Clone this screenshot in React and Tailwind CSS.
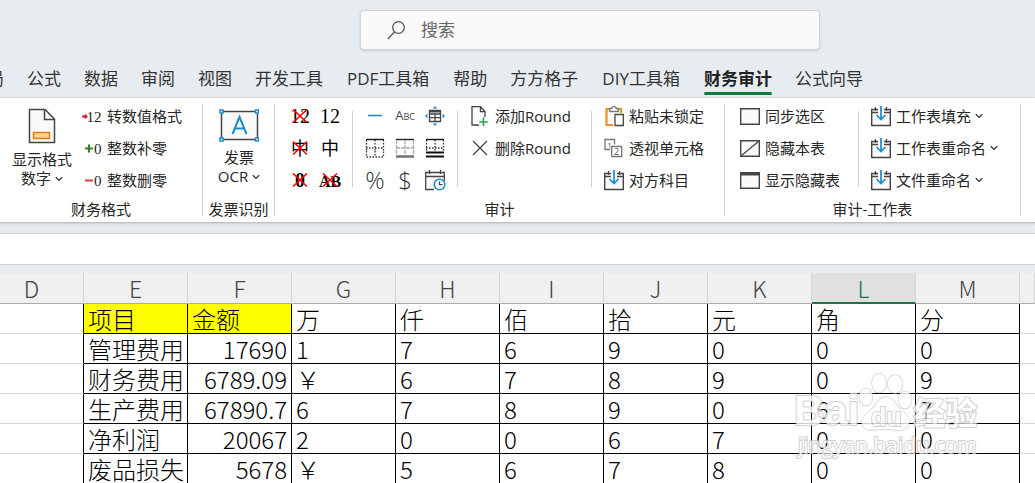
import clsx from "clsx";

const TABS = [
  "页面布局",
  "公式",
  "数据",
  "审阅",
  "视图",
  "开发工具",
  "PDF工具箱",
  "帮助",
  "方方格子",
  "DIY工具箱",
  "财务审计",
  "公式向导",
];

const COLUMNS = ["D", "E", "F", "G", "H", "I", "J", "K", "L", "M", ""];

const ROWS = [
  ["项目", "金额", "万", "仟", "佰", "拾", "元", "角", "分"],
  ["管理费用", "17690", "1", "7", "6", "9", "0", "0", "0"],
  ["财务费用", "6789.09", "￥", "6", "7", "8", "9", "0", "9"],
  ["生产费用", "67890.7", "6", "7", "8", "9", "0", "6", "7"],
  ["净利润", "20067", "2", "0", "0", "6", "7", "0", "0"],
  ["废品损失", "5678", "￥", "5", "6", "7", "8", "0", "0"],
];

function Icon({ children, className = "h-[22px] w-[22px]" }) {
  return (
    <svg
      viewBox="0 0 22 22"
      fill="none"
      stroke="#444"
      strokeWidth="1.3"
      className={clsx("block shrink-0", className)}
      aria-hidden="true"
    >
      {children}
    </svg>
  );
}

function Chevron() {
  return (
    <svg viewBox="0 0 8 6" className="h-1.5 w-2 shrink-0" fill="none" stroke="#333" strokeWidth="1.3" aria-hidden="true">
      <path d="M.8 1.2 4 4.4 7.2 1.2" />
    </svg>
  );
}

/* Digit icon with a coloured sign in front */
function SignedIcon({ sign, digits }) {
  return (
    <svg viewBox="0 0 20 22" className="block h-[22px] w-5 shrink-0" aria-hidden="true">
      {sign === "plus" && <path d="M3 11.5h8M7 7.5v8" stroke="#3c7d22" strokeWidth="2" />}
      {sign === "minus" && <path d="M3 11.5h8" stroke="#d9412f" strokeWidth="2" />}
      {sign === "arrow" && <path d="M0 11.5h5.5M3.5 9.5v4" stroke="#c9184a" strokeWidth="2" />}
      <text x="19.5" y="16.5" textAnchor="end" fontSize="15" fill="#222" fontFamily="Liberation Serif, serif">
        {digits}
      </text>
    </svg>
  );
}

function GlyphIcon({ text, crossed, size = 20, bold }) {
  return (
    <svg viewBox="0 0 20 22" className="block h-[22px] w-5 overflow-visible" aria-hidden="true">
      <text
        x="10"
        y="17.5"
        textAnchor="middle"
        fontSize={size}
        fontWeight={bold ? 700 : 400}
        fill="#000"
        fontFamily="Liberation Serif, Noto Sans CJK SC, serif"
      >
        {text}
      </text>
      {crossed && <path d="M3 4.5 17 17.5M17 4.5 3 17.5" stroke="#f00" strokeWidth="1.7" />}
    </svg>
  );
}

function CalendarArrowIcon() {
  return (
    <Icon>
      <path d="M1.7 4.5h18.6v16H1.7z" fill="#fafafa" strokeWidth="1.4" />
      <path d="M1 7.5h20M5.5 2v4M16.5 2v4" />
      <path d="M8 3h6v6H8z" fill="#fff" stroke="none" />
      <path d="M11 1v13M6.5 10l4.5 4.5 4.5-4.5" stroke="#1e8bcd" strokeWidth="1.7" />
    </Icon>
  );
}

function CalendarClockIcon() {
  return (
    <Icon>
      <path d="M10 20.5H1.7v-17h18.6V12" fill="#fafafa" />
      <path d="M1.7 7.5h18.6M5.5 1v4M16.5 1v4" />
      <circle cx="15.5" cy="15.5" r="5.3" fill="#fff" stroke="#1e8bcd" strokeWidth="1.6" />
      <path d="M15.5 12.5v3.2h3" stroke="#444" />
    </Icon>
  );
}

function MoveTableIcon() {
  return (
    <Icon>
      <path d="M5.5 5.5h11v11h-11zM5.5 9h11M5.5 12.7h11M11 8.5v8" />
      <path d="M5 6.5h12" strokeWidth="2" />
      <path d="m11 1 2.3 2.5H8.7zM11 21l2.3-2.5H8.7zM1 11l2.4-2.5v5zM21 11l-2.4-2.5v5z" fill="#1e8bcd" stroke="none" />
    </Icon>
  );
}

function BorderIcon({ kind }) {
  return (
    <Icon>
      {kind === "gray" ? (
        <>
          <path d="M2 2.5h18" stroke="#222" strokeWidth="1.4" />
          <path d="M2 11h18M11 3v15M2.5 3v15M19.5 3v15" stroke="#aaa" strokeDasharray="4 1" />
          <path d="M2 19.5h18" stroke="#777" strokeWidth="2.6" />
        </>
      ) : (
        <>
          <path d="M2 2.5h18" stroke="#111" strokeWidth="1.4" />
          <path d="M2 11h18M11 3v12M2.5 3v12M19.5 3v12" stroke="#333" strokeDasharray="1.5 1.5" />
          {kind === "dotted" ? (
            <path d="M2.5 14v6h17v-6M11 14v6" stroke="#333" strokeDasharray="1.5 1.5" />
          ) : (
            <path d="M2 15.5h18M2 19.5h18" stroke="#111" strokeWidth="1.8" />
          )}
        </>
      )}
    </Icon>
  );
}

function AddPageIcon() {
  return (
    <Icon>
      <path d="M10 20H3V1.7h8.5L16 6.5V12" fill="#fafafa" />
      <path d="M11.5 1.7v5H16" />
      <path d="M14.5 12.5v8.5M10.3 17h8.5" stroke="#2e9e4f" strokeWidth="1.6" />
    </Icon>
  );
}

function PasteIcon() {
  return (
    <Icon>
      <path d="M10 20H3.5V4H7M14 4h4v4" stroke="#e8912d" strokeWidth="2.2" />
      <path d="M6.7 6.5v-3h2.2C9 .9 13 .9 13.1 3.5h2.2v3z" fill="#fff" stroke="#777" />
      <path d="M12 9.5h8.3v11H12z" fill="#fff" />
    </Icon>
  );
}

function NumberedCellsIcon() {
  return (
    <Icon>
      <path d="M7 12.5H2v-10h9.5v5" stroke="#777" />
      <path d="M8.7 9.5h10v10h-10z" fill="#fff" stroke="#777" />
      <text x="6.5" y="10.5" fontSize="8" textAnchor="middle" fill="#555" stroke="none" fontFamily="Open Sans, sans-serif">
        1
      </text>
      <text x="13.7" y="18" fontSize="9" textAnchor="middle" fill="#555" stroke="none" fontFamily="Open Sans, sans-serif">
        2
      </text>
    </Icon>
  );
}

function SheetIcon({ kind }) {
  return (
    <Icon>
      <path d="M1.7 3.7h18.6v15.5H1.7z" fill="#fafafa" strokeWidth="1.4" />
      {kind === "slash" && <path d="M2.5 18.5 19.5 4.5" />}
      {kind === "title" && <path d="M1 5h20" strokeWidth="3" />}
    </Icon>
  );
}

function Separator({ short }) {
  return <div className={clsx("w-px shrink-0 self-stretch bg-[#cfcfcf]", short ? "mt-[13px] mb-[9px]" : "my-1.5")} />;
}

function Group({ title, children, className }) {
  return (
    <section className="flex shrink-0 flex-col" aria-label={title}>
      <div className={clsx("flex h-[98px]", className)}>{children}</div>
      <h2 className="py-px text-center text-[15px] leading-6">{title}</h2>
    </section>
  );
}

function Column({ children }) {
  return <div className="flex flex-col pt-0.5">{children}</div>;
}

function Command({ icon, label, menu, gap = "gap-1" }) {
  return (
    <button type="button" className={clsx("flex h-8 items-center whitespace-nowrap text-[15px]", gap)}>
      {icon}
      <span>{label}</span>
      {menu && <Chevron />}
    </button>
  );
}

function BigCommand({ icon, top, bottom }) {
  return (
    <button type="button" className="flex w-[60px] flex-col items-center justify-start pt-2 text-[15px] leading-[19px]">
      {icon}
      <span className="whitespace-nowrap">{top}</span>
      <span className="flex items-center gap-1 whitespace-nowrap">
        {bottom}
        <Chevron />
      </span>
    </button>
  );
}

function IconGrid({ items, className }) {
  return (
    <div className={clsx("grid auto-rows-[32px] pt-0.5", className)}>
      {items.map(([label, icon]) => (
        <button key={label} type="button" aria-label={label} className="flex items-center justify-center">
          {icon}
        </button>
      ))}
    </div>
  );
}

function Ribbon() {
  return (
    <div className="flex overflow-hidden border-t border-b border-t-[#dcdfe1] border-b-[#bfc3c6] bg-white text-[#262626] shadow-sm">
      <Group title="财务格式" className="pl-3 pr-5">
        <BigCommand
          top="显示格式"
          bottom="数字"
          icon={
            <svg viewBox="0 0 28 44" className="h-11 w-7" fill="none" aria-hidden="true">
              <path d="M1.5 3.5h15.5l9.5 9.5v23.5h-25z" fill="#fafafa" stroke="#444" strokeWidth="1.5" />
              <path d="M16.5 3.5v10h10" stroke="#444" strokeWidth="1.5" />
              <path d="M5.5 26.5h16v6h-16z" fill="#f8d48a" stroke="#e07b1a" strokeWidth="1.5" />
            </svg>
          }
        />
        <div className="w-2.5" />
        <Column>
          <Command gap="gap-[5px]" icon={<SignedIcon sign="arrow" digits="12" />} label="转数值格式" />
          <Command gap="gap-[5px]" icon={<SignedIcon sign="plus" digits="0" />} label="整数补零" />
          <Command gap="gap-[5px]" icon={<SignedIcon sign="minus" digits="0" />} label="整数删零" />
        </Column>
      </Group>
      <Separator />
      <Group title="发票识别" className="pl-1.5 pr-[5px]">
        <BigCommand
          top="发票"
          bottom="OCR"
          icon={
            <svg viewBox="0 0 40 42" className="h-[42px] w-10" fill="none" aria-hidden="true">
              <path d="M2.5 5.5h36v28h-36z" fill="#fafafa" stroke="#444" strokeWidth="1.5" />
              <g fill="#fff" stroke="#1e8bcd" strokeWidth="1.5">
                <path d="M1 4h3v3H1zM36.5 4h3v3h-3zM1 32h3v3H1zM36.5 32h3v3h-3z" />
              </g>
              <path d="m13.5 28 7-17 7 17M16 22.5h9" stroke="#1e8bcd" strokeWidth="2" />
            </svg>
          }
        />
      </Group>
      <Separator />
      <Group title="审计" className="pl-[15px] pr-5">
        <IconGrid
          className="grid-cols-[20px_20px] gap-x-2.5"
          items={[
            ["删除数字", <GlyphIcon text="12" crossed />],
            ["保留数字", <GlyphIcon text="12" />],
            ["删除中文", <GlyphIcon text="中" size={18} crossed />],
            ["保留中文", <GlyphIcon text="中" size={18} />],
            ["删除零值", <GlyphIcon text="0" size={20} crossed bold />],
            ["删除字母", <GlyphIcon text="AB" size={16} crossed bold />],
          ]}
        />
        <div className="w-3" />
        <Separator short />
        <div className="w-[11px]" />
        <IconGrid
          className="grid-cols-[22px_22px_22px] gap-x-2"
          items={[
            ["横线", <Icon><path d="M4 10.5h14" stroke="#1e8bcd" strokeWidth="1.6" /></Icon>],
            [
              "小型大写",
              <span className="text-[13px] text-[#444] [font-variant:small-caps]">Abc</span>,
            ],
            ["移动表格", <MoveTableIcon />],
            ["虚线边框", <BorderIcon kind="dotted" />],
            ["粗下边框", <BorderIcon kind="gray" />],
            ["双下边框", <BorderIcon kind="double" />],
            ["百分比", <span className="font-['Open_Sans'] text-[24px] leading-8 font-light text-[#333]">%</span>],
            ["货币", <span className="font-['Open_Sans'] text-[24px] leading-8 font-light text-[#333]">$</span>],
            ["日期", <CalendarClockIcon />],
          ]}
        />
        <div className="w-[11px]" />
        <Separator short />
        <div className="w-[11px]" />
        <Column>
          <Command icon={<AddPageIcon />} label="添加Round" />
          <Command
            icon={<Icon><path d="m4 4 14 14M18 4 4 18" /></Icon>}
            label="删除Round"
          />
        </Column>
        <div className="w-5" />
        <Separator short />
        <div className="w-[11px]" />
        <Column>
          <Command icon={<PasteIcon />} label="粘贴未锁定" />
          <Command icon={<NumberedCellsIcon />} label="透视单元格" />
          <Command icon={<CalendarArrowIcon />} label="对方科目" />
        </Column>
      </Group>
      <Separator />
      <Group title="审计-工作表" className="pl-3.5 pr-[22px]">
        <Column>
          <Command icon={<SheetIcon />} label="同步选区" />
          <Command icon={<SheetIcon kind="slash" />} label="隐藏本表" />
          <Command icon={<SheetIcon kind="title" />} label="显示隐藏表" />
        </Column>
        <div className="w-[18px]" />
        <Separator short />
        <div className="w-[11px]" />
        <Column>
          <Command icon={<CalendarArrowIcon />} label="工作表填充" menu />
          <Command icon={<CalendarArrowIcon />} label="工作表重命名" menu />
          <Command icon={<CalendarArrowIcon />} label="文件重命名" menu />
        </Column>
      </Group>
      <Separator />
    </div>
  );
}

function Sheet() {
  return (
    <table className="w-full table-fixed border-separate border-spacing-0 bg-white font-['Noto_Sans_CJK_SC',sans-serif] font-light text-black">
      <colgroup>
        {COLUMNS.map((name, i) => (
          <col key={i} className={clsx(i === 0 && "w-[84px]", i > 0 && name && "w-[104px]")} />
        ))}
      </colgroup>
      <thead>
        <tr className="h-[31px]">
          {COLUMNS.map((name, i) => (
            <th
              key={i}
              scope="col"
              className={clsx(
                "border-r border-r-[#d6d6d6] py-0 pl-0 text-center text-[23px] leading-7 font-light",
                i === 0 ? "pr-5" : "pr-0",
                name === "L"
                  ? "border-b-2 border-b-[#217346] bg-[#e0e0e0] text-[#217346]"
                  : "border-b border-b-[#ababab] bg-[#f0f0f0] text-[#444]",
              )}
            >
              {name}
            </th>
          ))}
        </tr>
      </thead>
      <tbody>
        {ROWS.map((cells, r) => (
          <tr key={r} className="h-[30px]">
            <td className="border-r border-b border-r-black border-b-[#d9d9d9] p-0" />
            {cells.map((value, c) => (
              <td
                key={c}
                className={clsx(
                  "border-r border-b border-black px-1 py-0 text-2xl leading-[29px] whitespace-nowrap",
                  r > 0 && c === 1 && "text-right",
                  r === 0 && c < 2 && "bg-[#ffff00]",
                )}
              >
                {value}
              </td>
            ))}
            <td className="border-b border-[#d9d9d9] p-0" />
          </tr>
        ))}
      </tbody>
    </table>
  );
}

function Watermark() {
  return (
    <div className="pointer-events-none absolute top-[98px] left-[794px] whitespace-nowrap text-white opacity-80 [-webkit-text-stroke:2px_#c4c4c4] [paint-order:stroke_fill]">
      <div className="flex h-[60px] items-end">
        <span className="font-['Liberation_Sans'] text-[42px] leading-10 font-bold">Bai</span>
        <div className="relative h-[60px] w-[54px]">
          <svg viewBox="0 0 54 60" className="h-full w-full" fill="#fff" stroke="#c4c4c4" strokeWidth="1.4" aria-hidden="true">
            <ellipse cx="7" cy="26" rx="6.5" ry="8.5" />
            <ellipse cx="20" cy="12" rx="7" ry="9.5" />
            <ellipse cx="36" cy="13" rx="7.5" ry="9" />
            <ellipse cx="46" cy="29" rx="6.5" ry="8.5" />
            <path d="M27 26c-7 0-9 7-13 11S3 45 3 51s5 9 11 8 8-1 13-1 8 1 14 1 9-4 9-9-6-9-10-13-6-11-13-11z" />
          </svg>
          <span className="absolute inset-x-0 bottom-0 text-center font-['Liberation_Sans'] text-[25px] leading-7 font-bold">
            du
          </span>
        </div>
        <span className="font-['Noto_Sans_CJK_SC',sans-serif] text-[32px] leading-10 font-bold">经验</span>
      </div>
      <div className="pl-1 font-['Open_Sans'] text-[21px] leading-7">jingyan.baidu.com</div>
    </div>
  );
}

export default function App() {
  return (
    <div className="h-screen overflow-hidden bg-[#e7ecf0] font-['Open_Sans','Noto_Sans_CJK_SC',sans-serif]">
      <header className="flex pt-2.5">
        <label className="ml-[360px] flex h-10 w-[460px] items-center gap-4 rounded border border-[#d2d4d6] bg-[#fafafa] pl-[26px] shadow-sm">
          <svg viewBox="0 0 18 20" className="h-5 w-[18px]" fill="none" stroke="#555" strokeWidth="1.3" aria-hidden="true">
            <circle cx="11.5" cy="7.5" r="5.8" />
            <path d="M7.5 12 .8 19" />
          </svg>
          <input
            type="text"
            aria-label="搜索"
            placeholder="搜索"
            className="min-w-0 flex-1 bg-transparent text-[17px] outline-none placeholder:text-[#666]"
          />
        </label>
      </header>

      <nav className="mt-2.5 flex h-[37px] gap-[23px] overflow-hidden text-[17px] text-[#333]">
        {TABS.map((tab, i) => (
          <button
            key={tab}
            type="button"
            className={clsx(
              "relative h-[37px] shrink-0 whitespace-nowrap",
              i === 0 && "-ml-16",
              /[A-Z]/.test(tab) && "px-px",
              tab === "财务审计" && "font-bold text-[#222]",
            )}
          >
            {tab}
            {tab === "财务审计" && (
              <span className="absolute inset-x-0 bottom-0.5 h-[3px] rounded-full bg-[#107c41]" />
            )}
          </button>
        ))}
      </nav>

      <Ribbon />

      <input
        type="text"
        aria-label="编辑栏"
        className="mt-2.5 mb-2 block h-8 w-full border-y border-[#cdd0d2] bg-white px-2 outline-none"
      />

      <div className="relative">
        <Sheet />
        <Watermark />
      </div>
    </div>
  );
}
